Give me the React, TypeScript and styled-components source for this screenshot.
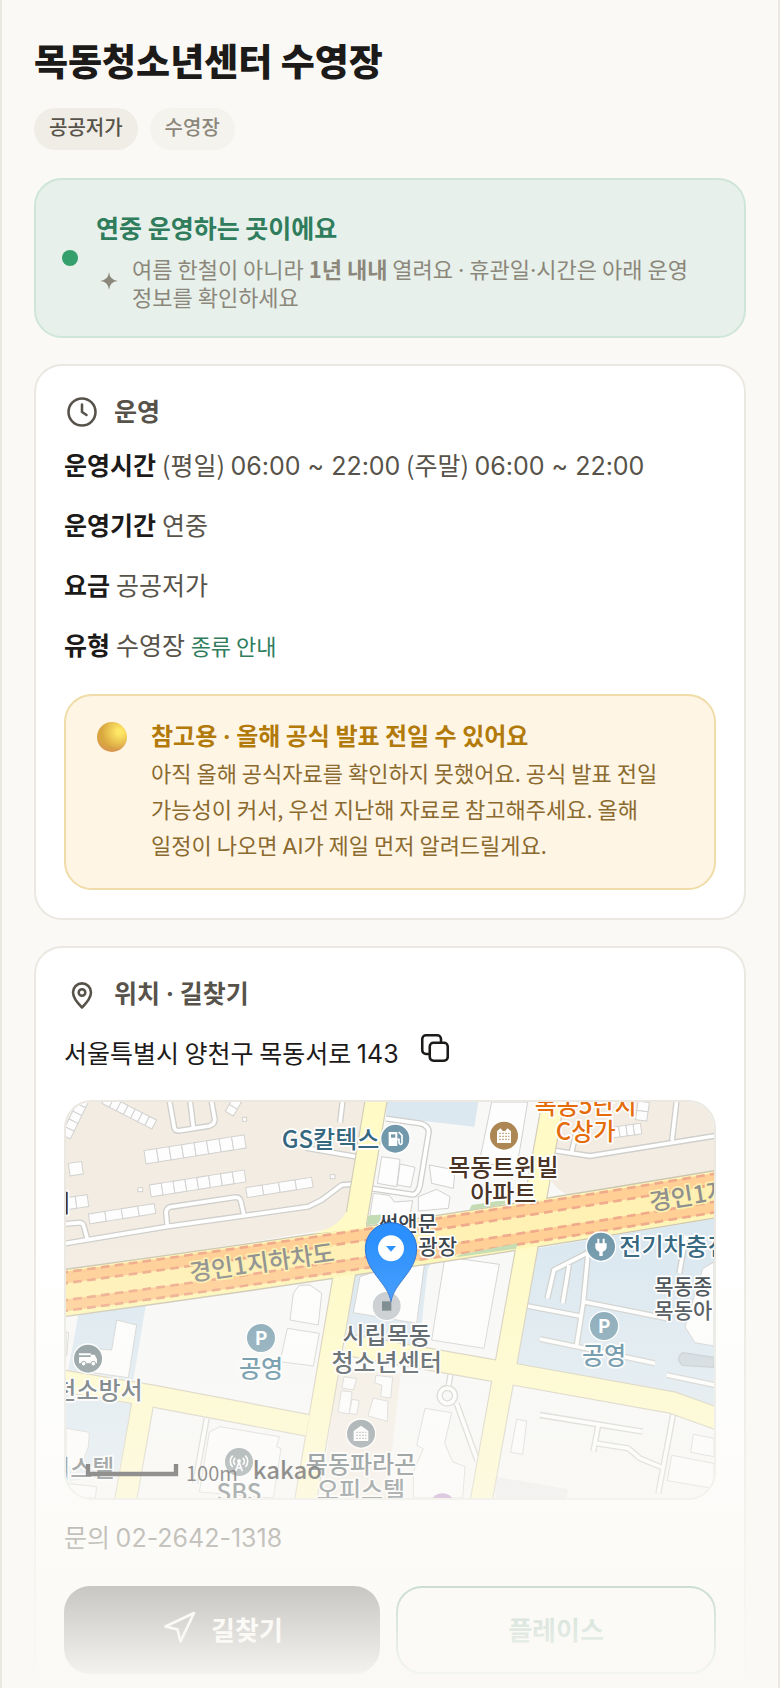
import type { ReactNode } from "react";
import styled, { createGlobalStyle } from "styled-components";
import { Navigation } from "lucide-react";

const GlobalStyle = createGlobalStyle`
  * {
    box-sizing: border-box;
  }
  body {
    margin: 0;
    background: #faf9f5;
    color: #1c1b19;
    font-family: "Noto Sans CJK KR", "Noto Sans", sans-serif;
    word-break: keep-all;
  }
  h1, h2, h3, p, dl, dd {
    margin: 0;
  }
`;

interface HouseRowProps {
  x: number;
  y: number;
  count: number;
  width: number;
  height: number;
  angle: number;
}

const HouseRow = ({ x, y, count, width, height, angle }: HouseRowProps) => (
  <g transform={`translate(${x} ${y}) rotate(${angle})`}>
    {Array.from({ length: count }, (_, i) => (
      <rect key={i} x={i * width} y={0} width={width} height={height} />
    ))}
  </g>
);

interface PoiProps {
  x: number;
  y: number;
  color: string;
  children: ReactNode;
}

const Poi = ({ x, y, color, children }: PoiProps) => (
  <g transform={`translate(${x} ${y})`}>
    <circle r={44} fill={color} stroke="#fff" strokeWidth={4} />
    {children}
  </g>
);

const mainRoads = [
  "M931 -10L866 380",
  "M838 500L718 1200",
  "M1463 -10L1245 1200",
  "M-20 835L250 880L725 970",
  "M840 728L1340 816L1820 902L1960 952",
  "M230 905L178 1200",
];

const lanes = [
  "M310 -5L325 78Q328 88 342 86L430 72Q448 66 446 50L436 -5",
  "M372 -5L382 76",
  "M830 -5L822 62",
  "M-5 425L302 374L727 314L767 294L827 249L862 246",
  "M304 372L300 330Q302 318 312 315L505 286Q520 284 524 296L534 340",
  "M-5 366L42 362Q52 364 54 374L64 412",
  "M720 138L870 164",
  "M960 50L1062 64Q1090 72 1088 92L1062 250Q1056 276 1040 278L920 260",
  "M1467 146L1572 162L1950 101",
  "M1832 -5L1818 116",
  "M1532 84L1517 150",
  "M1384 612L1542 642",
  "M1444 590L1464 504L1562 454",
  "M1490 604L1509 489",
  "M1567 444L1552 600L1532 729",
  "M1557 600L1802 649",
  "M1422 711L1552 738L1767 784",
  "M1860 400L1840 514",
  "M1802 819L1950 850",
  "M1422 939L1730 989",
  "M1597 969L1582 1049",
  "M1592 1024L1687 1039L1722 1069L1787 1096",
  "M1822 934L1777 1174",
  "M1154 814L1148 850",
  "M1172 905L1234 1076",
  "M422 949L387 1144",
];

const buildings = [
  "947,164 1002,172 992,254 934,244",
  "1002,186 1047,196 1034,256 994,249",
  "1090,189 1167,204 1162,259 1097,244",
  "1057,284 1112,262 1152,284 1147,319 1057,327",
  "1277,0 1385,0 1362,140 1350,200 1240,180",
  "922,274 970,280 985,300 1040,296 1030,350 912,340",
  "682,574 700,550 732,549 767,574 757,669 672,654",
  "664,679 760,694 742,792 642,779 652,734",
  "152,654 212,669 187,827 67,810 72,739 137,744",
  "462,974 640,1004 632,1034 645,1040 622,1188 400,1170 430,990",
  "0,979 70,991 67,1034 42,1100 0,1094",
  "0,1144 92,1154 88,1188 0,1188",
  "882,524 1020,480 1075,489 1052,664 862,632",
  "1137,464 1300,487 1254,739 1097,714",
  "1352,952 1382,957 1370,1057 1334,1051",
  "1882,997 1944,1009 1944,1064 1874,1051",
  "1817,1060 1944,1084 1944,1160 1804,1136",
  "1077,919 1157,932 1136,1024 1160,1080 1197,1094 1190,1188 1042,1188 1042,1110 1072,1040 1052,1030",
  "1910,500 1944,480 1944,732 1887,722 1857,674",
  "834,824 872,830 862,864 828,858",
  "826,866 858,870 850,936 816,930",
  "858,892 880,896 872,938 850,934",
  "930,820 980,826 974,888 944,884 948,850 926,842",
  "922,888 966,898 964,958 906,942",
  "0,690 8,692 2,760 0,760",
];

const LocationMap = () => (
  <MapDrawing
    viewBox="0 0 1944 1188"
    preserveAspectRatio="xMidYMid slice"
    role="img"
    aria-label="지도"
  >
    <rect width={1944} height={1188} fill="#f8f8f7" />

    {/* land use */}
    <g fill="#f3ece2">
      <path d="M0 0H900L870 170L840 330Q825 375 770 385L0 510Z" />
      <path d="M1480 0H1944V215L1510 280Q1460 260 1450 220Z" />
      <path d="M815 800L1004 815L962 1188H765Z" />
    </g>
    <g fill="#dbe8f0">
      <path d="M962 0H1237L1225 74L960 44Z" />
      <path d="M37 639L240 606L202 834L7 804Z" />
      <path d="M0 879L197 906L158 1110L0 1140Z" />
      <path d="M1405 440L1944 350V920L1832 872L1345 790Z" />
      <path d="M865 500L1110 460L1085 500L1060 730L840 700Z" />
    </g>
    <path d="M1288 1124L1507 1162L1502 1188H1288Z" fill="#eaeaea" />
    <path d="M1850 752L1944 766V796L1850 790Q1826 770 1850 752Z" fill="#cbd6dd" stroke="#bfc6ca" strokeWidth={4} />

    <g fill="#fdfdfd" stroke="#d2d2d0" strokeWidth={3}>
      {buildings.map((points) => (
        <polygon key={points} points={points} />
      ))}
      <HouseRow x={234} y={146} count={8} width={38} height={40} angle={-9} />
      <HouseRow x={250} y={249} count={8} width={36} height={36} angle={-9} />
      <HouseRow x={539} y={257} count={4} width={50} height={30} angle={-9} />
      <HouseRow x={67} y={336} count={4} width={50} height={30} angle={-9} />
      <HouseRow x={122} y={-22} count={7} width={24} height={30} angle={27} />
      <HouseRow x={7} y={184} count={1} width={40} height={38} angle={-8} />
      <HouseRow x={-8} y={288} count={2} width={36} height={36} angle={-8} />
      <HouseRow x={70} y={-6} count={5} width={26} height={30} angle={116} />
      <HouseRow x={478} y={28} count={3} width={24} height={28} angle={-60} />
      <HouseRow x={1636} y={76} count={4} width={22} height={32} angle={-8} />
      <HouseRow x={1750} y={2} count={2} width={28} height={34} angle={98} />
      <rect x={530} y={46} width={12} height={12} />
      <rect x={793} y={218} width={14} height={12} />
      <rect x={216} y={257} width={14} height={12} />
    </g>

    {/* side lanes */}
    <g fill="none" strokeLinejoin="round">
      <g stroke="#cfcfcc" strokeWidth={19}>
        {lanes.map((d) => (
          <path key={d} d={d} />
        ))}
        <circle cx={1144} cy={881} r={23} />
      </g>
      <g stroke="#fff" strokeWidth={11}>
        {lanes.map((d) => (
          <path key={d} d={d} />
        ))}
        <circle cx={1144} cy={881} r={23} />
      </g>
    </g>

    {/* main roads */}
    <g fill="none" strokeLinejoin="round">
      <g stroke="#d3cdb9" strokeWidth={69}>
        {mainRoads.map((d) => (
          <path key={d} d={d} />
        ))}
      </g>
      <path d="M-20 575Q972 441 1964 274" stroke="#cdc6b2" strokeWidth={144} />
      <path d="M840 330Q820 375 740 395L900 380V330Z" fill="#fffac6" />
      <g stroke="#fffac6" strokeWidth={62}>
        {mainRoads.map((d) => (
          <path key={d} d={d} />
        ))}
      </g>
      <path d="M-20 575Q972 441 1964 274" stroke="#fdf6b8" strokeWidth={136} />
      <path d="M-20 571Q972 437 1964 270" stroke="#ffcf95" strokeWidth={118} />
      <path d="M-20 571Q972 437 1964 270" stroke="#fff0b4" strokeWidth={48} />
      <g stroke="#efab8b" strokeWidth={8} strokeDasharray="26 16">
        <path d="M-20 513Q972 379 1964 212" />
        <path d="M-20 546Q972 412 1964 245" />
        <path d="M-20 597Q972 463 1964 296" />
        <path d="M-20 629Q972 495 1964 328" />
      </g>
    </g>
    <g fill="#c4dcb3">
      <path d="M1217 309L1317 294L1317 306L1210 325Z" />
      <path d="M1180 458L1355 424L1350 440L1170 466Z" />
      <path d="M907 341L960 336L955 362L902 370Z" />
    </g>

    {/* points of interest */}
    <Poi x={988} y={110} color="#7299ab">
      <path d="M-20 -20H6V22H-20Z" fill="#fff" />
      <rect x={-13} y={-13} width={13} height={10} fill="#7299ab" />
      <path d="M10 -20L20 -10V14Q15 22 11 12V2H6" fill="none" stroke="#fff" strokeWidth={5} />
    </Poi>
    <Poi x={1314} y={101} color="#ac8653">
      <path d="M-21 22V-13L-11 -22L-3 -14L3 -14L11 -22L21 -13V22Z" fill="#fff" />
      <path d="M-14 -7H16M-14 2H16M-14 11H16" stroke="#ac8653" strokeWidth={4} strokeDasharray="4 5" />
    </Poi>
    <Poi x={1605} y={434} color="#7299ab">
      <path d="M-17 -10H17V2Q16 12 5 15V28H-5V15Q-16 12 -17 2ZM-11 -24H-5V-10H-11ZM5 -24H11V-10H5Z" fill="#fff" />
    </Poi>
    <Poi x={585} y={708} color="#7ba0b1">
      <ParkingLetter>P</ParkingLetter>
    </Poi>
    <Poi x={1614} y={672} color="#7ba0b1">
      <ParkingLetter>P</ParkingLetter>
    </Poi>
    <Poi x={66} y={770} color="#7d8c90">
      <path d="M-27 -16H8V-10H-27ZM-27 -5H8V-12H20L27 2V14H-27Z" fill="#fff" />
      <circle cx={-13} cy={15} r={7} fill="#fff" stroke="#7d8c90" strokeWidth={3} />
      <circle cx={16} cy={15} r={7} fill="#fff" stroke="#7d8c90" strokeWidth={3} />
    </Poi>
    <Poi x={885} y={995} color="#7f8b90">
      <path d="M-22 22V-8L0 -24L22 -8V22Z" fill="#fff" />
      <path d="M-14 -4H16M-14 5H16M-14 14H16" stroke="#7f8b90" strokeWidth={4} strokeDasharray="4 5" />
    </Poi>
    <Poi x={519} y={1080} color="#7f8b90">
      <path
        d="M-11 -12A12 12 0 0 0 -11 8M11 -12A12 12 0 0 1 11 8M-19 -19A24 24 0 0 0 -19 15M19 -19A24 24 0 0 1 19 15M-10 28L0 0L10 28M-6 18H6"
        fill="none"
        stroke="#fff"
        strokeWidth={5}
      />
      <circle cy={-3} r={6} fill="#fff" />
    </Poi>
    <Poi x={962} y={612} color="#c6cacd">
      <rect x={-14} y={-14} width={28} height={28} fill="#6c7c82" />
    </Poi>
    <circle cx={1129} cy={1212} r={38} fill="#b98bc4" />

    <MapLabel x={647} y={137} $color="#35677f">GS칼텍스</MapLabel>
    <MapLabel x={1312} y={221} $color="#4a3426" $anchor="middle">목동트윈빌</MapLabel>
    <MapLabel x={1312} y={300} $color="#4a3426" $anchor="middle">아파트</MapLabel>
    <MapLabel x={1559} y={36} $color="#e46c0a" $anchor="middle">목동5단지</MapLabel>
    <MapLabel x={1559} y={115} $color="#e46c0a" $anchor="middle">C상가</MapLabel>
    <MapLabel x={14} y={329} $color="#4a3426" $anchor="end">지</MapLabel>
    <MapLabel x={1026} y={386} $color="#3b444b" $anchor="middle" $small>썬앤문</MapLabel>
    <MapLabel x={1057} y={457} $color="#3b444b" $small>광장</MapLabel>
    <MapLabel x={1660} y={459} $color="#35677f">전기차충전</MapLabel>
    <MapLabel x={1765} y={575} $color="#3b444b" $small>목동종</MapLabel>
    <MapLabel x={1765} y={649} $color="#3b444b" $small>목동아</MapLabel>
    <MapLabel x={585} y={826} $color="#4b8098" $anchor="middle">공영</MapLabel>
    <MapLabel x={1614} y={787} $color="#4b8098" $anchor="middle">공영</MapLabel>
    <MapLabel x={230} y={890} $color="#4d585e" $anchor="end">양천소방서</MapLabel>
    <MapLabel x={145} y={1126} $color="#4d585e" $anchor="end">오피스텔</MapLabel>
    <MapLabel x={962} y={727} $color="#3b474e" $anchor="middle">시립목동</MapLabel>
    <MapLabel x={962} y={807} $color="#3b474e" $anchor="middle">청소년센터</MapLabel>
    <MapLabel x={885} y={1113} $color="#4d585e" $anchor="middle">목동파라곤</MapLabel>
    <MapLabel x={885} y={1190} $color="#4d585e" $anchor="middle">오피스텔</MapLabel>
    <MapLabel x={519} y={1197} $color="#4d585e" $anchor="middle">SBS</MapLabel>
    <g transform="translate(374 538) rotate(-8)">
      <MapLabel $color="#8f8f8f" $halo="#fdf0ae">경인1지하차도</MapLabel>
    </g>
    <g transform="translate(1754 326) rotate(-9)">
      <MapLabel $color="#8f8f8f" $halo="#fdf0ae">경인1지하차도</MapLabel>
    </g>

    {/* scale and provider */}
    <path d="M66 1086V1116H330V1086" fill="none" stroke="#1d1d1d" strokeWidth={13} />
    <ScaleText x={360} y={1138}>100m</ScaleText>
    <ProviderText x={560} y={1132}>kakao</ProviderText>

    <path
      d="M975 599C965 540 898 510 898 439A77 77 0 0 1 1052 439C1052 510 985 540 975 599Z"
      fill="#2b90fd"
      stroke="#2a6fd0"
      strokeWidth={3}
    />
    <circle cx={975} cy={439} r={39} fill="#fff" />
    <path d="M960 432H990L975 449Z" fill="#2b90fd" />
  </MapDrawing>
);

const ClockIcon = () => (
  <LineIcon viewBox="0 0 24 24">
    <circle cx="12" cy="12" r="9" />
    <path d="M12 7v5l3 2" />
  </LineIcon>
);

const PinIcon = () => (
  <LineIcon viewBox="0 0 24 24">
    <path d="M18 10.9c0 4-3.4 7.6-6 10.1-2.6-2.5-6-6.1-6-10.1a6 6 0 0 1 12 0z" />
    <circle cx="12" cy="11" r="2.2" />
  </LineIcon>
);

const CopyIcon = () => (
  <LineIcon viewBox="0 0 24 24">
    <rect x="8.5" y="8.5" width="12" height="12" rx="2.5" />
    <path d="M8.5 16H6a2.5 2.5 0 0 1-2.5-2.5V6A2.5 2.5 0 0 1 6 3.500h7.500A2.500 2.500 0 0 1 16 6v2.500" />
  </LineIcon>
);

const App = () => {
  return (
    <>
      <GlobalStyle />
      <Page>
        <Header>
          <PageTitle>목동청소년센터 수영장</PageTitle>
          <Chips>
            <Chip>공공저가</Chip>
            <Chip $muted>수영장</Chip>
          </Chips>
        </Header>

        <Banner>
          <StatusDot />
          <BannerBody>
            <BannerTitle>연중 운영하는 곳이에요</BannerTitle>
            <BannerNote>
              <Sparkle viewBox="0 0 24 24">
                <path d="M12 4Q12.8 11.2 20 12Q12.8 12.8 12 20Q11.2 12.8 4 12Q11.2 11.2 12 4Z" />
              </Sparkle>
              <p>
                여름 한철이 아니라 <b>1년 내내</b> 열려요 <Latin>·</Latin>{" "}
                휴관일<Latin>·</Latin>시간은 아래 운영 정보를 확인하세요
              </p>
            </BannerNote>
          </BannerBody>
        </Banner>

        <Card>
          <CardTitle>
            <ClockIcon />
            운영
          </CardTitle>
          <InfoList>
            <InfoRow>
              <dt>운영시간</dt>
              <dd>
                (평일) <Latin>06:00 ~ 22:00</Latin> (주말){" "}
                <Latin>06:00 ~ 22:00</Latin>
              </dd>
            </InfoRow>
            <InfoRow>
              <dt>운영기간</dt>
              <dd>연중</dd>
            </InfoRow>
            <InfoRow>
              <dt>요금</dt>
              <dd>공공저가</dd>
            </InfoRow>
            <InfoRow>
              <dt>유형</dt>
              <dd>
                수영장 <GuideLink href="#types">종류 안내</GuideLink>
              </dd>
            </InfoRow>
          </InfoList>
          <Notice>
            <NoticeBall />
            <div>
              <NoticeTitle>
                참고용 <Latin>·</Latin> 올해 공식 발표 전일 수 있어요
              </NoticeTitle>
              <NoticeText>
                아직 올해 공식자료를 확인하지 못했어요. 공식 발표 전일 가능성이
                커서, 우선 지난해 자료로 참고해주세요. 올해 일정이 나오면{" "}
                <Latin>AI</Latin>가 제일 먼저 알려드릴게요.
              </NoticeText>
            </div>
          </Notice>
        </Card>

        <Card>
          <CardTitle>
            <PinIcon />
            <span>
              위치 <Latin>·</Latin> 길찾기
            </span>
          </CardTitle>
          <Address>
            <span>
              서울특별시 양천구 목동서로 <Latin>143</Latin>
            </span>
            <CopyButton type="button" aria-label="주소 복사">
              <CopyIcon />
            </CopyButton>
          </Address>
          <MapFrame>
            <LocationMap />
          </MapFrame>
          <Contact>
            문의 <Latin>02-2642-1318</Latin>
          </Contact>
          <Actions>
            <RouteButton type="button">
              <Navigation size={36} strokeWidth={1.7} />
              길찾기
            </RouteButton>
            <PlaceButton type="button">플레이스</PlaceButton>
          </Actions>
        </Card>
        <Fade />
      </Page>
    </>
  );
};

export default App;

const Page = styled.main`
  position: relative;
  height: 100vh;
  overflow: hidden;
  padding: 34px 32px 0;
  border: solid #eae8e1;
  border-width: 0 2px;
`;

const Header = styled.header`
  margin-bottom: 28px;
`;

const PageTitle = styled.h1`
  margin-bottom: 22px;
  font-size: 37px;
  font-weight: 900;
  line-height: 52px;
`;

const Chips = styled.div`
  display: flex;
  gap: 12px;
`;

const Chip = styled.span<{ $muted?: boolean }>`
  padding: 0 15px 4px;
  border-radius: 21px;
  background: ${({ $muted }) => ($muted ? "#f4f3ee" : "#efede6")};
  color: ${({ $muted }) => ($muted ? "#8c877b" : "#57534a")};
  font-size: 20px;
  font-weight: 500;
  line-height: 38px;
`;

const Banner = styled.section`
  display: flex;
  align-items: center;
  gap: 18px;
  padding: 24px 26px;
  margin-bottom: 26px;
  border: 2px solid #cfe5d9;
  border-radius: 28px;
  background: #e7f0ea;
`;

const StatusDot = styled.span`
  flex: none;
  width: 16px;
  height: 16px;
  border-radius: 50%;
  background: #35a06c;
`;

const BannerBody = styled.div`
  flex: 1;
`;

const BannerTitle = styled.h2`
  margin-bottom: 4px;
  color: #2f7d5c;
  font-size: 25px;
  font-weight: 700;
  line-height: 46px;
`;

const BannerNote = styled.div`
  display: flex;
  align-items: center;
  gap: 10px;
  margin-bottom: 2px;
  color: #8c877b;
  font-size: 22px;
  line-height: 28px;
`;

const Sparkle = styled.svg`
  flex: none;
  width: 26px;
  height: 26px;
  margin-bottom: 2px;
  fill: currentColor;
`;

const Card = styled.section`
  padding: 28px;
  margin-bottom: 26px;
  border: 2px solid #eae8e1;
  border-radius: 28px;
  background: #fff;
`;

const CardTitle = styled.h2`
  display: flex;
  align-items: flex-start;
  gap: 14px;
  color: #57534a;
  font-size: 25px;
  font-weight: 700;
  line-height: 32px;
`;

const LineIcon = styled.svg`
  flex: none;
  display: block;
  width: 36px;
  height: 36px;
  fill: none;
  stroke: currentColor;
  stroke-width: 1.7;
  stroke-linecap: round;
  stroke-linejoin: round;
`;

const Latin = styled.span`
  font-family: Inter, sans-serif;
  line-height: 1;
`;

const InfoList = styled.dl`
  display: flex;
  flex-direction: column;
  gap: 16px;
  margin-top: 12px;
`;

const InfoRow = styled.div`
  display: flex;
  gap: 6px;
  color: #57534a;
  font-size: 25px;
  line-height: 44px;

  & dt {
    color: #1c1b19;
    font-weight: 700;
  }
`;

const GuideLink = styled.a`
  color: #2f7d5c;
  font-size: 22px;
  line-height: 1;
  text-decoration: none;
`;

const Notice = styled.div`
  display: flex;
  gap: 24px;
  padding: 24px 28px 26px 31px;
  margin-top: 28px;
  border: 2px solid #f0dca8;
  border-radius: 28px;
  background: #fff5e5;
`;

const NoticeBall = styled.span`
  flex: none;
  width: 30px;
  height: 30px;
  margin-top: 2px;
  border-radius: 50%;
  background:
    radial-gradient(circle at 75% 32%, #ffe766 8%, rgba(255, 220, 90, 0) 60%),
    radial-gradient(circle at 50% 30%, #d9a63f 55%, #d98a5c 100%);
`;

const NoticeTitle = styled.h3`
  margin-bottom: 4px;
  color: #b27a0a;
  font-size: 24px;
  font-weight: 700;
  line-height: 30px;
`;

const NoticeText = styled.p`
  color: #8a6a2f;
  font-size: 22px;
  line-height: 36px;
`;

const Address = styled.div`
  display: flex;
  align-items: flex-start;
  gap: 18px;
  margin: 18px 0 26px;
  font-size: 25px;
  line-height: 44px;
`;

const CopyButton = styled.button`
  padding: 0;
  border: 0;
  background: none;
  color: inherit;
  cursor: pointer;
`;

const MapFrame = styled.div`
  height: 400px;
  overflow: hidden;
  border: 2px solid #eae8e1;
  border-radius: 28px;
`;

const MapDrawing = styled.svg`
  display: block;
  width: 100%;
  height: 100%;
`;

const MapLabel = styled.text<{
  $color: string;
  $anchor?: string;
  $halo?: string;
  $small?: boolean;
}>`
  fill: ${({ $color }) => $color};
  stroke: ${({ $halo }) => $halo ?? "#fff"};
  stroke-width: 10px;
  stroke-linejoin: round;
  paint-order: stroke;
  text-anchor: ${({ $anchor }) => $anchor ?? "start"};
  font-size: ${({ $small }) => ($small ? "63px" : "72px")};
  font-weight: 500;
`;

const ParkingLetter = styled.text.attrs({ y: 20 })`
  fill: #fff;
  text-anchor: middle;
  font-size: 57px;
  font-weight: 700;
`;

const ScaleText = styled.text`
  fill: #1d1d1d;
  font-size: 60px;
`;

const ProviderText = styled.text`
  fill: #1d1d1d;
  font-size: 72px;
  font-weight: 500;
`;

const Contact = styled.p`
  margin: 14px 0 28px;
  color: #57534a;
  font-size: 25px;
  line-height: 44px;
`;

const Actions = styled.div`
  display: flex;
  gap: 16px;
`;

const ActionButton = styled.button`
  flex: 1 1 0;
  display: flex;
  align-items: center;
  justify-content: center;
  gap: 14px;
  height: 88px;
  padding: 0 0 4px;
  border: 0;
  border-radius: 26px;
  font-family: inherit;
  font-size: 26px;
  font-weight: 700;
  cursor: pointer;
`;

const RouteButton = styled(ActionButton)`
  background: #1c1b19;
  color: #fff;
`;

const PlaceButton = styled(ActionButton)`
  border: 2px solid #2f7d5c;
  background: #fff;
  color: #2f7d5c;
`;

const Fade = styled.div`
  position: absolute;
  right: 0;
  bottom: 0;
  left: 0;
  height: 450px;
  background: linear-gradient(rgba(250, 249, 245, 0), #faf9f5);
  pointer-events: none;
`;
